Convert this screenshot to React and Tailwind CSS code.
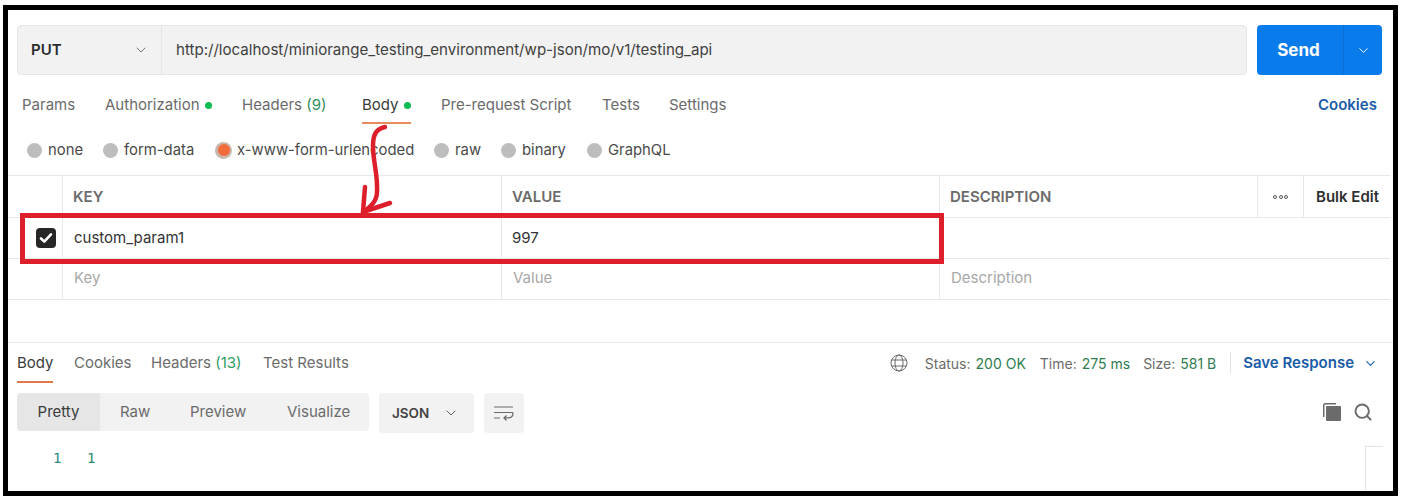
import React from "react";
import { ChevronDown, Search } from "lucide-react";

const font = { fontFamily: "Inter, 'Liberation Sans', sans-serif" };

function Dot() {
  return <span className="ml-[5px] inline-block h-[7px] w-[7px] rounded-full bg-[#0cbb52]" />;
}

function Tab({ w, children, active }) {
  return (
    <div className={`flex h-[38px] shrink-0 items-center whitespace-nowrap ${w} ${active ? "text-[#3b3b3b]" : "text-[#6b6b6b]"}`}>
      {children}
    </div>
  );
}

function Radio({ w, label, on }) {
  return (
    <div className={`flex shrink-0 items-center whitespace-nowrap ${w}`}>
      {on ? (
        <span className="mr-[5px] flex h-[17px] w-[17px] items-center justify-center rounded-full bg-[#c9b6ac]">
          <span className="h-[12px] w-[12px] rounded-full bg-[#f26b3a]" />
        </span>
      ) : (
        <span className="mr-[6px] h-[15px] w-[15px] rounded-full bg-[#bdbdbd]" />
      )}
      <span className="text-[14.85px] text-[#4a4a4a]">{label}</span>
    </div>
  );
}

function Row({ h, children, top }) {
  return (
    <div className={`flex ${h} border-b border-[#e8e8e8] ${top ? "border-t" : ""}`}>{children}</div>
  );
}

function Cell({ w, children, className = "" }) {
  return (
    <div className={`flex shrink-0 items-center border-r border-[#e8e8e8] ${w} ${className}`}>{children}</div>
  );
}

export default function App() {
  return (
    <div className="h-[500px] w-[1401px] overflow-hidden bg-white pb-[4px] pl-[3px] pr-[3px] pt-[5px] text-[15px]" style={font}>
      <div className="relative h-full border-[5px] border-black bg-white">
        {/* Request bar */}
        <div className="flex pl-[9px] pt-[15px]">
          <div className="flex h-[50px] w-[1230px] items-center rounded-[4px] border border-[#e6e6e6] bg-[#f2f2f2]">
            <div className="flex h-full w-[144px] shrink-0 items-center justify-between border-r border-[#e6e6e6] pl-[13px] pr-[12px]">
              <span className="font-semibold text-[#2b2b2b]">PUT</span>
              <ChevronDown size={16} strokeWidth={1.4} className="text-[#6b6b6b]" />
            </div>
            <span className="pl-[14px] text-[15.08px] text-[#3f3f3f]">http://localhost/miniorange_testing_environment/wp-json/mo/v1/testing_api</span>
          </div>
          <div className="ml-[10px] flex h-[50px] w-[125px] rounded-[4px] bg-[#0a7bea] text-white">
            <div className="flex w-[87px] items-center justify-center border-r border-[#0a6fd4] pr-[3px] pt-[1px] text-[17px] font-bold">Send</div>
            <div className="flex flex-1 items-center justify-center">
              <ChevronDown size={15} strokeWidth={1.5} />
            </div>
          </div>
        </div>

        {/* Request tabs */}
        <div className="mt-[11px] flex pl-[14px]">
          <Tab w="w-[83px]">Params</Tab>
          <Tab w="w-[137px]">Authorization<Dot /></Tab>
          <Tab w="w-[120px]">
            Headers&nbsp;<span className="text-[#2f8f5b]">(9)</span>
          </Tab>
          <Tab w="w-[79px]" active>
            <div className="relative flex h-full items-center">
              Body<Dot />
              <span className="absolute bottom-[0px] left-0 right-0 h-[2px] bg-[#ea8b5e]" />
            </div>
          </Tab>
          <Tab w="w-[161px]">Pre-request Script</Tab>
          <Tab w="w-[67px]">Tests</Tab>
          <Tab w="w-[649px]">Settings</Tab>
          <Tab w="w-[60px]"><span className="font-semibold text-[#1a5ca8]">Cookies</span></Tab>
        </div>

        {/* Body types */}
        <div className="mt-[7px] flex h-[38px] items-center pl-[19px] pt-[1px]">
          <Radio w="w-[76px]" label="none" />
          <Radio w="w-[112px]" label="form-data" />
          <Radio w="w-[219px]" label="x-www-form-urlencoded" on />
          <Radio w="w-[67px]" label="raw" />
          <Radio w="w-[86px]" label="binary" />
          <Radio w="w-[90px]" label="GraphQL" />
        </div>

        {/* Params table */}
        <div className="mt-[6px] pr-[3px]">
          <Row h="h-[43px]" top>
            <Cell w="w-[55px]" />
            <Cell w="w-[439px]" className="pl-[10px] pt-[1px] font-semibold text-[#6b6b6b]">KEY</Cell>
            <Cell w="w-[438px]" className="pl-[10px] pt-[1px] font-semibold text-[#6b6b6b]">VALUE</Cell>
            <Cell w="w-[318px]" className="pl-[10px] pt-[1px] font-semibold text-[#6b6b6b]">DESCRIPTION</Cell>
            <Cell w="w-[46px]" className="justify-center">
              <span className="flex gap-[1.5px]">
                <i className="h-[4px] w-[4px] rounded-full border border-[#555]" />
                <i className="h-[4px] w-[4px] rounded-full border border-[#555]" />
                <i className="h-[4px] w-[4px] rounded-full border border-[#555]" />
              </span>
            </Cell>
            <div className="flex flex-1 items-center pl-[12px] pt-[1px] font-semibold text-[#2f2f2f]">Bulk Edit</div>
          </Row>
          <Row h="h-[41px]">
            <Cell w="w-[55px]" className="pl-[28px]">
              <span className="flex h-[20px] w-[20px] shrink-0 items-center justify-center rounded-[4px] bg-[#262626]">
                <svg width="14" height="12" viewBox="0 0 14 12" fill="none" stroke="#fff" strokeWidth="2.6" strokeLinecap="round" strokeLinejoin="round">
                  <path d="M2 6.5 5.3 9.6 12 2.4" />
                </svg>
              </span>
            </Cell>
            <Cell w="w-[439px]" className="pl-[11px] text-[#333]">custom_param1</Cell>
            <Cell w="w-[438px]" className="pl-[10px] text-[#333]">997</Cell>
            <div className="flex-1" />
          </Row>
          <Row h="h-[41px]">
            <Cell w="w-[55px]" />
            <Cell w="w-[439px]" className="pb-[2px] pl-[11px] text-[#a8a8a8]">Key</Cell>
            <Cell w="w-[438px]" className="pb-[2px] pl-[11px] text-[#a8a8a8]">Value</Cell>
            <div className="flex flex-1 items-center pb-[2px] pl-[11px] text-[#a8a8a8]">Description</div>
          </Row>
        </div>

        {/* Response header */}
        <div className="mt-[42px] flex h-[41px] items-stretch border-t border-[#e8e8e8] pl-[9px] pr-[15px]">
          <div className="relative flex w-[57px] items-center text-[#3b3b3b]">
            Body
            <span className="absolute bottom-0 left-0 h-[2px] w-[36px] bg-[#e2774a]" />
          </div>
          <div className="flex w-[77px] items-center text-[#6b6b6b]">Cookies</div>
          <div className="flex w-[112px] items-center whitespace-nowrap text-[#6b6b6b]">
            Headers&nbsp;<span className="text-[#2f9e63]">(13)</span>
          </div>
          <div className="flex items-center text-[#6b6b6b]">Test Results</div>
          <div className="ml-auto flex items-center text-[14px] text-[#6b6b6b]">
            <svg width="18" height="18" viewBox="0 0 18 18" fill="none" stroke="#6b6b6b" strokeWidth="1" className="mr-[17px]">
              <circle cx="9" cy="9" r="8" />
              <ellipse cx="9" cy="9" rx="4" ry="8" />
              <path d="M1.6 6h14.8M1.6 12h14.8" />
            </svg>
            <span>Status:</span>
            <span className="ml-[5px] text-[#2f7d52]">200 OK</span>
            <span className="ml-[14px]">Time:</span>
            <span className="ml-[5px] text-[#2f7d52]">275 ms</span>
            <span className="ml-[13px]">Size:</span>
            <span className="ml-[5px] text-[#2f7d52]">581 B</span>
            <span className="ml-[14px] h-[22px] w-px bg-[#e3e3e3]" />
            <span className="ml-[12px] pt-[1px] text-[15px] font-semibold text-[#1a5ca8]">Save Response</span>
            <ChevronDown size={15} strokeWidth={1.8} className="ml-[9px] text-[#1a5ca8]" />
          </div>
        </div>

        {/* Response toolbar */}
        <div className="mt-[10px] flex items-start pl-[9px] pr-[20px]">
          <div className="flex h-[38px] w-[352px] items-center rounded-[4px] bg-[#f2f2f2] text-[#6b6b6b]">
            <div className="flex h-full w-[83px] items-center justify-center rounded-l-[4px] bg-[#e6e6e6] text-[#3b3b3b]">Pretty</div>
            <div className="w-[70px] pl-[20px]">Raw</div>
            <div className="w-[97px] pl-[20px]">Preview</div>
            <div className="pl-[20px]">Visualize</div>
          </div>
          <div className="ml-[10px] flex h-[40px] w-[95px] items-center justify-between rounded-[4px] bg-[#f2f2f2] pl-[13px] pr-[15px]">
            <span className="text-[13.5px] font-semibold text-[#444]">JSON</span>
            <ChevronDown size={16} strokeWidth={1.4} className="text-[#555]" />
          </div>
          <div className="ml-[10px] flex h-[40px] w-[40px] items-center justify-center rounded-[4px] bg-[#f2f2f2]">
            <svg width="20" height="16" viewBox="0 0 20 16" fill="none" stroke="#6b6b6b" strokeWidth="1.2">
              <path d="M0 2h19M0 7.500h19M0 13h6" />
              <path d="M19 7.500c0 5.500-2 5.500-9 5.500M12.500 10.500 10 13l2.500 2.500" />
            </svg>
          </div>
          <div className="ml-auto flex h-[38px] items-center gap-[12px]">
            <svg width="18" height="18" viewBox="0 0 18 18" fill="#6b6b6b">
              <path d="M0 2.500A2.500 2.500 0 0 1 2.500 0H13v1.500H2.500a1 1 0 0 0-1 1V14H0z" />
              <rect x="3" y="3" width="15" height="15" rx="1" />
            </svg>
            <Search size={20} strokeWidth={2.3} className="text-[#6b6b6b]" />
          </div>
        </div>

        {/* Response body */}
        <div className="mt-[15px] flex text-[14px] text-[#2a8a84]" style={{ fontFamily: "'DejaVu Sans Mono', monospace" }}>
          <span className="ml-[45px] w-[34px]">1</span>
          <span className="text-[#2a8a6f]">1</span>
        </div>
        <div className="absolute bottom-0 right-[10px] h-[45px] w-[18px] border-l border-t border-[#e3e3e3]" />

        {/* Annotation */}
        <div className="absolute left-[12px] top-[203px] h-[51px] w-[924px] border-[5px] border-[#dc1f2b]" />
        <svg className="absolute left-[340px] top-[108px]" width="60" height="110" viewBox="0 0 60 110" fill="none" stroke="#dc1f2b" strokeWidth="4.500" strokeLinecap="round" strokeLinejoin="round">
          <path d="M37 9C29 11 25 15 25 28c0 14 4 26 4 40 1 12-2 18-14 26" />
          <path d="M17 69l-2 25M15 94l27-9" />
        </svg>
      </div>
    </div>
  );
}
